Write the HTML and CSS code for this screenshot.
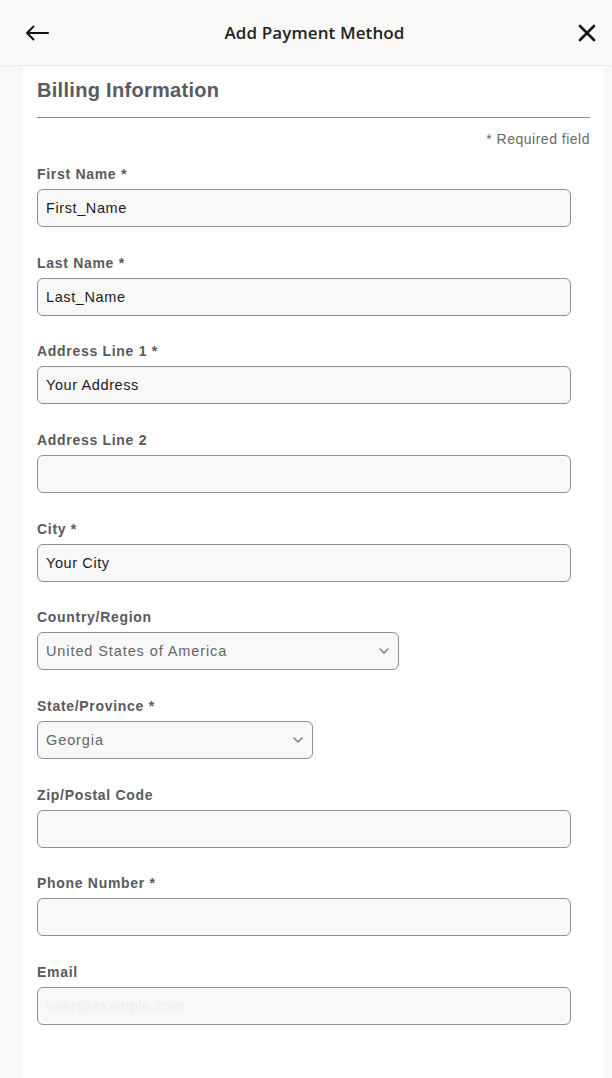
FILE: index.html
```html
<!DOCTYPE html>
<html lang="en">
<head>
<meta charset="utf-8">
<title>Add Payment Method</title>
<link rel="stylesheet" href="styles.css">
</head>
<body>
<header class="topbar">
  <button class="icon-btn back" aria-label="Back">
    <svg width="24" height="16" viewBox="0 0 24 16"><path d="M23 8H2M8.5 1.5L2 8l6.5 6.5" fill="none" stroke="#111" stroke-width="2" stroke-linecap="round" stroke-linejoin="round"/></svg>
  </button>
  <h1 class="topbar-title">Add Payment Method</h1>
  <button class="icon-btn close" aria-label="Close">
    <svg width="18" height="18" viewBox="0 0 18 18"><path d="M2 2l14 14M16 2L2 16" fill="none" stroke="#111" stroke-width="2.6" stroke-linecap="round"/></svg>
  </button>
</header>
<main class="panel">
  <h2 class="section-title">Billing Information</h2>
  <p class="required-note">* Required field</p>
  <form class="form">
    <div class="field">
      <label class="label">First Name *</label>
      <div class="input full">First_Name</div>
    </div>
    <div class="field">
      <label class="label">Last Name *</label>
      <div class="input full">Last_Name</div>
    </div>
    <div class="field">
      <label class="label">Address Line 1 *</label>
      <div class="input full">Your Address</div>
    </div>
    <div class="field">
      <label class="label">Address Line 2</label>
      <div class="input full"></div>
    </div>
    <div class="field">
      <label class="label">City *</label>
      <div class="input full">Your City</div>
    </div>
    <div class="field">
      <label class="label">Country/Region</label>
      <div class="input select country"><span>United States of America</span>
        <svg class="chev" width="10" height="6" viewBox="0 0 10 6"><path d="M1 1l4 4 4-4" fill="none" stroke="#777" stroke-width="1.4" stroke-linecap="round" stroke-linejoin="round"/></svg>
      </div>
    </div>
    <div class="field">
      <label class="label">State/Province *</label>
      <div class="input select state"><span>Georgia</span>
        <svg class="chev" width="10" height="6" viewBox="0 0 10 6"><path d="M1 1l4 4 4-4" fill="none" stroke="#777" stroke-width="1.4" stroke-linecap="round" stroke-linejoin="round"/></svg>
      </div>
    </div>
    <div class="field">
      <label class="label">Zip/Postal Code</label>
      <div class="input full"></div>
    </div>
    <div class="field">
      <label class="label">Phone Number *</label>
      <div class="input full"></div>
    </div>
    <div class="field">
      <label class="label">Email</label>
      <div class="input full faint">user@example.com</div>
    </div>
  </form>
</main>
</body>
</html>
```
FILE: styles.css
```css
* { box-sizing: border-box; }
html, body { margin: 0; padding: 0; }
body {
  background: #f9f8f6;
  font-family: "Liberation Sans", Arial, sans-serif;
  color: #222;
  min-height: 1078px;
  display: flex;
  flex-direction: column;
}
.topbar {
  height: 66px;
  display: flex;
  align-items: center;
  justify-content: space-between;
  padding: 0 16px 0 25px;
  border-bottom: 1px solid #efedea;
  background: #faf9f7;
}
.icon-btn {
  border: 0;
  background: none;
  padding: 0;
  display: flex;
  align-items: center;
}
.topbar-title {
  margin: 0;
  font-family: "Open Sans", "Liberation Sans", sans-serif;
  font-size: 17px;
  font-weight: 600;
  letter-spacing: 0.1px;
  color: #232323;
  padding-left: 2px;
}
.panel {
  flex: 1;
  margin: 0 8px 0 23px;
  background: #fff;
  padding: 12px 14px 40px 14px;
}
.section-title {
  margin: 0;
  font-size: 20px;
  line-height: 24px;
  font-weight: bold;
  letter-spacing: 0.3px;
  color: #595b5e;
  padding-bottom: 15px;
  border-bottom: 1px solid #8c8c8c;
}
.required-note {
  margin: 13px 0 0;
  text-align: right;
  font-size: 14px;
  line-height: 16px;
  letter-spacing: 0.5px;
  color: #6a6a6a;
}
.form {
  display: flex;
  flex-direction: column;
  gap: 27.67px;
  margin-top: 19px;
}
.field {
  display: flex;
  flex-direction: column;
  gap: 7px;
}
.label {
  font-size: 14px;
  line-height: 16px;
  font-weight: bold;
  letter-spacing: 0.7px;
  color: #585a5c;
}
.input {
  height: 38px;
  border: 1.5px solid #8f8f8f;
  border-radius: 6px;
  background: #f8f8f8;
  padding: 0 8px;
  display: flex;
  align-items: center;
  font-size: 14.5px;
  letter-spacing: 0.6px;
  color: #1c1c1c;
}
.full { width: 534px; }
.select {
  justify-content: space-between;
  color: #666;
  letter-spacing: 0.9px;
  padding-right: 9px;
}
.country { width: 362px; }
.state { width: 276px; }
.faint { color: #efefef; }
```
